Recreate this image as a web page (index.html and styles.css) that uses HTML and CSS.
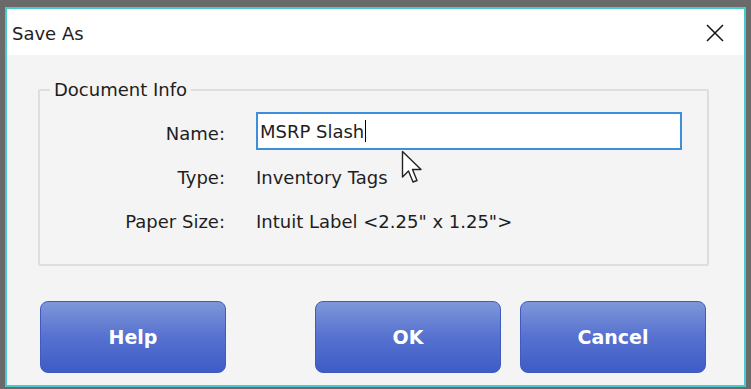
FILE: index.html
```html
<!DOCTYPE html>
<html>
<head>
    <meta charset="UTF-8">
    <title>Save As</title>
    <link rel="stylesheet" href="styles.css">
</head>
<body>
    <div class="window">
        <div class="titlebar">
            <span class="title">Save As</span>
            <svg class="close" width="18" height="18" viewBox="0 0 18 18">
                <path d="M1 1 L17 17 M17 1 L1 17" stroke="#1a1a1a" stroke-width="1.6" fill="none"/>
            </svg>
        </div>
        <div class="content">
            <fieldset class="group">
                <legend>Document Info</legend>
                <div class="row">
                    <label>Name:</label>
                    <div class="field">MSRP Slash<span class="caret"></span></div>
                </div>
                <div class="row">
                    <label>Type:</label>
                    <span class="value">Inventory Tags</span>
                </div>
                <div class="row">
                    <label>Paper Size:</label>
                    <span class="value">Intuit Label &lt;2.25" x 1.25"&gt;</span>
                </div>
            </fieldset>
            <div class="buttons">
                <button class="btn">Help</button>
                <button class="btn btn-ok">OK</button>
                <button class="btn">Cancel</button>
            </div>
        </div>
        <!-- mouse pointer over the dialog -->
        <svg class="pointer" width="24" height="36" viewBox="0 0 24 36">
            <path d="M1.5 1.5 L1.5 27 L7.5 21 L12 32 L16 30.5 L11.5 19.5 L20 19.5 Z" fill="#fff" stroke="#222" stroke-width="1.4" stroke-linejoin="round"/>
        </svg>
    </div>
</body>
</html>
```

FILE: styles.css
```css
body {
    margin: 0;
    background-color: #6a6a6a;
    font-family: "DejaVu Sans", Tahoma, sans-serif;
    font-size: 18px;
    color: #1e1e1e;
}

.window {
    position: relative;
    margin: 7px 5px 0 5px;
    width: 737px;
    height: 376px;
    border: 2px solid #4cc9cf;
    background-color: #f4f4f4;
    display: flex;
    flex-direction: column;
}

.titlebar {
    height: 46px;
    background-color: #fff;
    display: flex;
    align-items: center;
    justify-content: space-between;
    padding: 0 20px 0 5px;
}

.title {
    font-size: 18px;
    margin-top: 2px;
}

.close {
    margin-top: 2px;
}

.content {
    flex: 1;
    display: flex;
    flex-direction: column;
    padding: 0 35px 0 33px;
}

.group {
    margin: 24px 0 0 -2px;
    padding: 11px 0 0 0;
    border: 2px solid #dedede;
    border-radius: 2px;
    height: 187px;
    box-sizing: border-box;
}

.group legend {
    margin-left: 10px;
    padding: 0 4px;
    font-size: 18px;
}

.row {
    display: flex;
    align-items: center;
    height: 44px;
}

.row label {
    width: 185px;
    text-align: right;
    padding-right: 31px;
}

.field {
    width: 420px;
    height: 34px;
    border: 2px solid #3d8fdc;
    background-color: #fff;
    display: flex;
    align-items: center;
    padding-left: 2px;
    margin-top: -4px;
}

.caret {
    display: inline-block;
    width: 1px;
    height: 22px;
    background-color: #000;
    margin-left: 1px;
}

.buttons {
    display: flex;
    gap: 19px;
    margin: 35px 3px 0 0;
}

.btn {
    width: 186px;
    height: 72px;
    border: 1px solid #3f5bbd;
    border-radius: 8px;
    background: linear-gradient(#7f97d9, #5671cf 50%, #3e5cc6);
    color: #fff;
    font-family: "DejaVu Sans", Tahoma, sans-serif;
    font-weight: bold;
    font-size: 19px;
}

.btn-ok {
    margin-left: auto;
}

.pointer {
    position: absolute;
    left: 394px;
    top: 141px;
}
```
